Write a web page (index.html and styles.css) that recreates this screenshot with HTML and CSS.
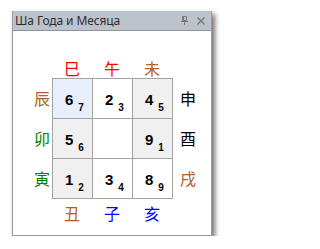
FILE: index.html
```html
<!DOCTYPE html>
<html>
<head>
<meta charset="utf-8">
<link rel="stylesheet" href="styles.css">
</head>
<body>
<div class="window">
  <div class="titlebar">
    <span class="title">Ша Года и Месяца</span>
    <span class="tools">
      <svg class="pin" width="7" height="9" viewBox="0 0 7 9"><path d="M1.5 0.5h4v4h-4z M2.5 1v3.5" fill="none" stroke="#777" stroke-width="1"/><path d="M0 5.5h7M3.5 5.5v3.5" stroke="#777" stroke-width="1"/></svg>
      <svg class="close" width="8" height="8" viewBox="0 0 8 8"><path d="M0.5 0.5l7 7M7.5 0.5l-7 7" stroke="#777" stroke-width="1.4"/></svg>
    </span>
  </div>
  <div class="content">
    <div class="board">
      <div class="corner"></div>
      <div class="toprow">
        <span class="br fire">巳</span><span class="br fire">午</span><span class="br earth">未</span>
      </div>
      <div class="corner"></div>

      <div class="side left">
        <span class="br earth">辰</span><span class="br wood">卯</span><span class="br wood">寅</span>
      </div>
      <div class="square">
        <div class="cell hl"><span class="big">6</span><span class="sub">7</span></div>
        <div class="cell"><span class="big">2</span><span class="sub">3</span></div>
        <div class="cell gray"><span class="big">4</span><span class="sub">5</span></div>
        <div class="cell gray"><span class="big">5</span><span class="sub">6</span></div>
        <div class="cell"></div>
        <div class="cell gray"><span class="big">9</span><span class="sub">1</span></div>
        <div class="cell gray"><span class="big">1</span><span class="sub">2</span></div>
        <div class="cell"><span class="big">3</span><span class="sub">4</span></div>
        <div class="cell"><span class="big">8</span><span class="sub">9</span></div>
      </div>
      <div class="side right">
        <span class="br metal">申</span><span class="br metal">酉</span><span class="br earth">戌</span>
      </div>

      <div class="corner"></div>
      <div class="bottomrow">
        <span class="br earth">丑</span><span class="br water">子</span><span class="br water">亥</span>
      </div>
      <div class="corner"></div>
    </div>
  </div>
</div>
</body>
</html>
```

FILE: styles.css
```css
html, body {
  margin: 0;
  padding: 0;
  background: #ffffff;
}
.window {
  margin: 11px 0 0 12px;
  width: 198px;
  height: 224px;
  border: 1px solid #9a9a9a;
  border-top: none;
  background: #ffffff;
  box-shadow: 3px 3px 5px rgba(0, 0, 0, 0.55);
}
.titlebar {
  height: 19px;
  background: #bcc3cd;
  border-bottom: 1px solid #8f959d;
  display: flex;
  align-items: center;
  justify-content: space-between;
  padding: 0 6px 0 2px;
}
.title {
  font-family: "Noto Sans", "Open Sans", sans-serif;
  font-size: 12px;
  color: #2e2e2e;
  letter-spacing: -0.1px;
}
.tools {
  display: flex;
  align-items: center;
  gap: 9px;
}
.pin { display: block; }
.close { display: block; }
.content {
  padding: 27px 0 0 19px;
}
.board {
  display: grid;
  grid-template-columns: 20px 121px 30px;
  grid-template-rows: 20px 121px 28px;
}
.toprow, .bottomrow {
  display: grid;
  grid-template-columns: 40px 40px 40px;
  align-items: center;
  justify-items: center;
}
.side {
  display: grid;
  grid-template-rows: 40px 40px 40px;
  align-items: center;
  justify-items: center;
}
.br {
  font-family: "Noto Sans CJK SC", "Noto Sans CJK JP", sans-serif;
  font-size: 16px;
  line-height: 17px;
}
.fire { color: #ff0000; }
.earth { color: #b0602e; }
.wood { color: #008000; }
.metal { color: #000000; }
.water { color: #0000ff; }
.square {
  display: grid;
  grid-template-columns: 39px 39px 39px;
  grid-template-rows: 39px 39px 39px;
  gap: 1px;
  padding: 1px;
  background: #a3a3a3;
}
.cell {
  background: #ffffff;
  padding: 12px 0 0 12px;
  font-family: "Liberation Sans", Arial, sans-serif;
  font-weight: bold;
  color: #000000;
  line-height: 17px;
  white-space: nowrap;
}
.cell.hl { background: #e8effc; }
.cell.gray { background: #f0f0f0; }
.big {
  font-size: 15px;
}
.sub {
  font-size: 10px;
  margin-left: 5px;
  vertical-align: -6px;
}
```
